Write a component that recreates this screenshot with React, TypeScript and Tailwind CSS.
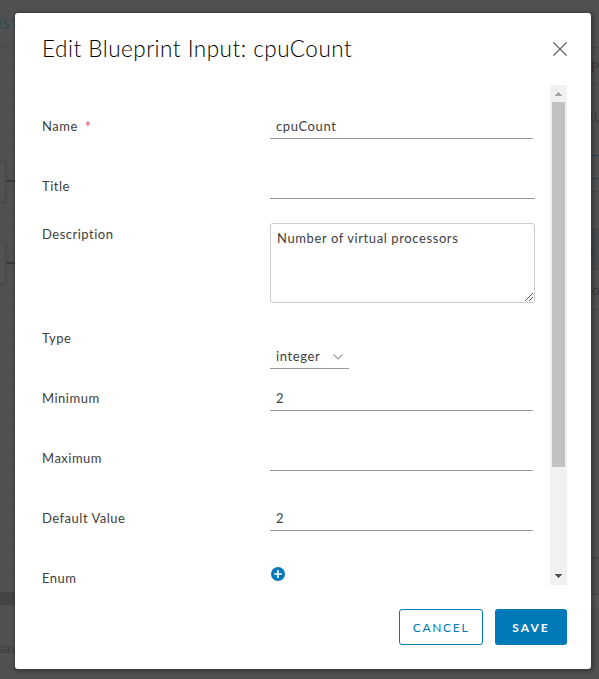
import React from 'react';

const CANVAS_DOTS = Array.from({ length: 27 }, (_, i) => i);

function NodeStub({ className }: { className: string }) {
  return (
    <div className={`absolute left-0 flex w-[15px] items-center ${className}`}>
      <div className="h-[42px] w-[6px] rounded-r-[3px] border border-l-0 border-[#484848] bg-[#525252] shadow-[0_1px_2px_#404040]" />
      <div className="-mt-px h-[2px] flex-1 bg-[#3b3b3b]" />
    </div>
  );
}

function Backdrop() {
  return (
    <div className="absolute inset-0 flex justify-between bg-[#505050]">
      <div className="relative w-[20px] text-[#3d3d3d]">
        <div className="flex h-[48px] items-end border-b border-[#4a4a4a] pb-[13px]">
          <span className="-ml-[2px] text-[13px] leading-[20px] tracking-[1px] text-[#2f4857]">IST</span>
        </div>
        <div className="flex h-[544px] flex-col gap-[18px] pt-px">
          {CANVAS_DOTS.map((i) => (
            <div key={i} className="ml-[11px] h-[2px] w-[2px] shrink-0 rounded-full bg-[#444444]" />
          ))}
        </div>
        <div className="h-[13px] bg-[#444444]" />
        <div className="mt-[33px] text-[14px] leading-[20px] tracking-[0.3px]">
          <span className="-ml-[3px]">sav</span>
        </div>
        <NodeStub className="top-[160px]" />
        <NodeStub className="top-[242px]" />
      </div>
      <div className="w-[9px] text-[#383838]">
        <div className="h-[48px] border-b border-[#464646]" />
        <div className="flex h-[36px] items-center border-b border-[#464646] pt-[5px] text-[13px]">
          <span className="ml-px">P</span>
        </div>
        <div className="flex h-[71px] items-start pt-[15px] text-[22px] font-light leading-[30px]">
          <span className="-ml-[9px]">ou</span>
        </div>
        <div className="h-[24px] border-y border-[#2b4252]" />
        <div className="h-[13px] border-b border-[#464646]" />
        <div className="h-[36px]" />
        <div className="h-[42px] border-y border-[#434343] bg-[#474b4d] pt-[13px] text-[13px] leading-[18px]">:</div>
        <div className="h-[40px] border-b border-[#464646] pl-[2px] pt-[10px] text-[13px] leading-[20px]">o</div>
        <div className="h-[249px] border-b-2 border-[#464646]" />
        <div className="h-[36px] border-b border-[#464646]" />
        <div className="h-[12px] bg-[#545454]" />
      </div>
    </div>
  );
}

function Row({ children, className }: { children: React.ReactNode; className: string }) {
  return <div className={`flex shrink-0 ${className}`}>{children}</div>;
}

function Label({ children }: { children: React.ReactNode }) {
  return <div className="flex w-[228px] shrink-0 whitespace-nowrap pt-[2px] leading-[18px] tracking-[0.5px]">{children}</div>;
}

function Field({ value, className }: { value?: string; className: string }) {
  return (
    <div className={`h-[24px] border-b border-[#999999] px-[6px] pt-[2px] leading-[18px] tracking-[0.6px] ${className}`}>
      {value}
    </div>
  );
}

function Scrollbar() {
  return (
    <div className="flex h-[500px] w-[17px] shrink-0 flex-col items-center bg-[#f1f1f1]">
      <svg className="h-[17px] w-[17px]" viewBox="0 0 17 17" shapeRendering="crispEdges">
        <path d="M5 11 8.5 7 12 11Z" fill="#a3a3a3" />
      </svg>
      <div className="h-[365px] w-[13px] bg-[#c1c1c1]" />
      <div className="flex-1" />
      <svg className="h-[17px] w-[17px]" viewBox="0 0 17 17" shapeRendering="crispEdges">
        <path d="M5 6 8.5 10 12 6Z" fill="#505050" />
      </svg>
    </div>
  );
}

export default function App() {
  return (
    <div className="relative h-[679px] w-[599px] overflow-hidden pl-[15px] pt-[13px] font-[Lato,sans-serif] text-[13px] text-[#404040]">
      <Backdrop />
      <main className="relative flex h-[656px] w-[576px] flex-col rounded-[3px] bg-white pl-[27px] pr-[24px] shadow-[1px_1px_3px_2px_rgba(0,0,0,0.25)]">
        <header className="flex h-[72px] items-start justify-between pt-[22px]">
          <h1 className="whitespace-nowrap text-[22.5px] font-light leading-[28px] tracking-[0.5px] text-black">
            Edit Blueprint Input: cpuCount
          </h1>
          <svg className="mt-[7px] h-[14px] w-[14px]" viewBox="0 0 14 14" fill="none" stroke="#666666" strokeWidth="1.25" strokeLinecap="round">
            <path d="M.7.7 13.3 13.3M13.3.7.7 13.3" />
          </svg>
        </header>
        <div className="flex h-[500px] justify-between overflow-hidden">
          <form className="flex w-[493px] flex-col pt-[30px]">
            <Row className="h-[60px]">
              <Label>
                Name<span className="pl-[7px] text-[15px] text-[#e1583e]">*</span>
              </Label>
              <Field className="w-[263px]" value="cpuCount" />
            </Row>
            <Row className="h-[48px]">
              <Label>Title</Label>
              <Field className="w-[265px]" />
            </Row>
            <Row className="h-[104px]">
              <Label>Description</Label>
              <div className="relative h-[80px] w-[265px] rounded-[3px] border border-[#cccccc] px-[6px] pt-[5px] leading-[18px] tracking-[0.6px]">
                Number of virtual processors
                <svg className="absolute bottom-px right-px h-[8px] w-[8px]" viewBox="0 0 8 8" stroke="#555555" strokeWidth="1" fill="none">
                  <path d="M0 8 8 0M4 8 8 4" />
                </svg>
              </div>
            </Row>
            <Row className="h-[60px]">
              <Label>Type</Label>
              <div className="mt-[18px] flex h-[24px] w-[79px] justify-between border-b border-[#999999] px-[6px] pt-[2px] leading-[18px] tracking-[0.6px]">
                integer
                <svg className="mt-[7px] h-[6px] w-[10px]" viewBox="0 0 10 6" fill="none" stroke="#999999" strokeWidth="1.2" strokeLinecap="round">
                  <path d="M1 .8 5 4.8 9 .8" />
                </svg>
              </div>
            </Row>
            <Row className="h-[60px]">
              <Label>Minimum</Label>
              <Field className="w-[263px]" value="2" />
            </Row>
            <Row className="h-[60px]">
              <Label>Maximum</Label>
              <Field className="w-[263px]" />
            </Row>
            <Row className="h-[60px]">
              <Label>Default Value</Label>
              <Field className="w-[263px]" value="2" />
            </Row>
            <Row className="h-[20px]">
              <Label>Enum</Label>
              <svg className="ml-px h-[14px] w-[14px]" viewBox="0 0 14 14">
                <circle cx="7" cy="7" r="7" fill="#0079b8" />
                <path d="M7 3v8M3 7h8" stroke="#fff" strokeWidth="1.6" />
              </svg>
            </Row>
          </form>
          <Scrollbar />
        </div>
        <footer className="flex justify-end gap-[12px] pt-[24px] leading-[18px]">
          <button type="button" className="h-[36px] w-[84px] whitespace-nowrap rounded-[3px] border border-[#0079b8] pt-px text-[12px] tracking-[1.7px] text-[#0079b8]">
            CANCEL
          </button>
          <button type="button" className="h-[36px] w-[72px] whitespace-nowrap rounded-[3px] bg-[#0079b8] pt-px text-[12px] font-bold tracking-[2px] text-white">
            SAVE
          </button>
        </footer>
      </main>
    </div>
  );
}
